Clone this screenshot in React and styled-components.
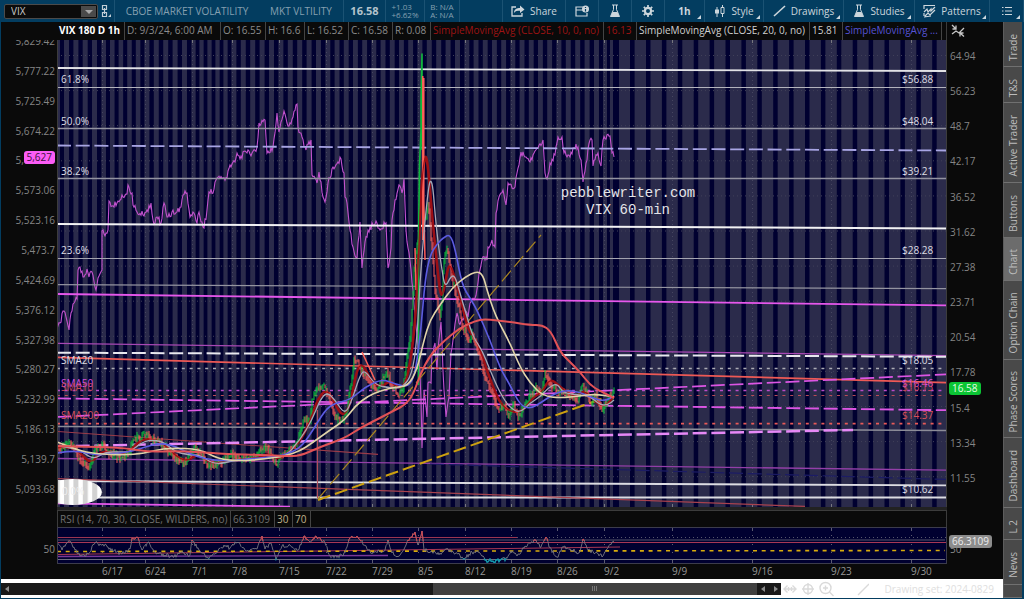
import React from 'react';
import styled, { createGlobalStyle } from 'styled-components';

const GlobalStyle = createGlobalStyle`
  * {
    box-sizing: border-box;
  }
  body {
    margin: 0;
    background: #0a0a0a;
    font-family: 'Open Sans', 'Noto Sans', sans-serif;
    font-size: 10px;
    line-height: 14px;
    color: #8a8a8a;
  }
  button, select {
    font: inherit;
    color: inherit;
    border: 0;
    padding: 0;
    margin: 0;
    background: none;
  }
`;

const Page = styled.div`
  display: flex;
  flex-direction: column;
  min-height: 100vh;
  background: #0a0a0a;
  border: solid #033d60;
  border-width: 0 2px 1px 1px;
`;

const Toolbar = styled.header`
  display: flex;
  align-items: stretch;
  height: 22px;
  margin: 0 -2px 0 -1px;
  background: #033d60;
  color: #86a0b0;
  white-space: nowrap;
`;

const SymbolPicker = styled.div`
  position: relative;
  width: 94px;
  height: 15px;
  margin: 4px 0 0 4px;
  background: #0b0b0b;
  border: 1px solid #4b4b4b;
  border-radius: 2px;
`;

const SymbolSelect = styled.select`
  appearance: none;
  display: block;
  width: 100%;
  height: 13px;
  padding: 0 18px 0 6px;
  line-height: 13px;
  color: #c8c8c8;
`;

const PickerArrow = styled.span`
  position: absolute;
  top: 1px;
  right: 1px;
  width: 15px;
  height: 11px;
  background: #4a4a4a;
  pointer-events: none;
  &::after {
    content: '';
    position: absolute;
    left: 4px;
    top: 4px;
    border: 4px solid transparent;
    border-top-color: #a8a8a8;
    border-bottom: 0;
  }
`;

const Cell = styled.div`
  display: flex;
  align-items: center;
  flex: ${props => (props.grow ? '1 0' : '0 0')} ${props => props.width}px;
  justify-content: center;
  ${props => (props.line ? 'border-right: 1px solid #1b5273;' : '')}
`;

const Price = styled.strong`
  font-size: 11px;
  color: #b4c3cc;
`;

const Stack = styled.div`
  font-size: 8px;
  line-height: 8px;
`;

const ToolButton = styled.button`
  position: relative;
  display: flex;
  align-items: center;
  justify-content: center;
  gap: 5px;
  flex: 0 0 ${props => props.width}px;
  color: #ccd6dd;
  border-right: 1px solid #1b5273;
  font-weight: ${props => (props.bold ? 700 : 400)};
  ${props => (props.menu ? `
  &::after {
    content: '';
    position: absolute;
    right: 3px;
    bottom: 3px;
    border: 2px solid transparent;
    border-right-color: #ccd6dd;
    border-bottom-color: #ccd6dd;
  }` : '')}
`;

const Workspace = styled.div`
  display: flex;
  flex: 1;
`;

const Main = styled.main`
  display: grid;
  grid-template-columns: 56px minmax(0, 1fr) 56px;
  grid-template-rows: 18px minmax(460px, 1fr) 3px 17px 37px 15px 19px;
  flex: 1;
  min-width: 0;
`;

const StudyBar = styled.div`
  grid-column: 2;
  display: flex;
  overflow: hidden;
  white-space: nowrap;
  border-right: 1px solid #3c3c3c;
  ${props => (props.framed ? 'border: 1px solid #3c3c3c; border-bottom: 0;' : '')}
`;

const Study = styled.div`
  flex: none;
  width: ${props => props.width}px;
  padding: 1px 2px 0;
  border-right: 1px solid #444;
  color: ${props => props.color || '#8c8c8c'};
  font-weight: ${props => (props.bold ? 700 : 400)};
`;

const Corner = styled.div`
  grid-column: 3;
  padding: 2px 0 0 4px;
`;

const Axis = styled.div`
  position: relative;
  min-height: 0;
  overflow: hidden;
  display: flex;
  flex-direction: column;
  justify-content: space-between;
  color: #858585;
  text-align: ${props => (props.side === 'left' ? 'right' : 'left')};
  padding: ${props => (props.side === 'left' ? '0 2px 11px 0' : '9px 0 22px 3px')};
  ${props => (props.side === 'left' ? '& > span:first-child { margin-top: -6px; }' : '')}
`;

const Tag = styled.div`
  position: absolute;
  z-index: 1;
  top: ${props => props.top};
  ${props => (props.side === 'left' ? 'right: 2px;' : 'left: 2px;')}
  padding: 0 3px;
  line-height: 13px;
  border-radius: 3px;
  background: ${props => props.bg};
  color: ${props => props.ink};
`;

const Plot = styled.div`
  position: relative;
  min-width: 0;
  min-height: 0;
  background: #000030;
  border-left: 1px solid #3c3c3c;
  border-right: 1px solid #3c3c3c;
  ${props => (props.framed ? 'border: 1px solid #3c3c4c;' : '')}
`;

const Drawing = styled.svg`
  position: absolute;
  inset: 0;
  width: 100%;
  height: 100%;
`;

const Divider = styled.div`
  grid-column: 1 / -1;
  margin: 0 56px;
  background: #222;
`;

const RsiAxis = styled.div`
  position: relative;
  padding: ${props => (props.side === 'left' ? '15px 2px 0 0' : '15px 0 0 3px')};
  text-align: ${props => (props.side === 'left' ? 'right' : 'left')};
`;

const Dates = styled.div`
  grid-column: 2 / 4;
  display: flex;
  padding-left: 45px;
  color: #969696;
  white-space: nowrap;
`;

const DateLabel = styled.span`
  flex: ${props => props.span} 0 0;
  min-width: 0;
`;

const Footer = styled.footer`
  grid-column: 1 / -1;
  display: flex;
  align-items: center;
  background: #fff;
  color: #e0e0e0;
  white-space: nowrap;
`;

const ScrollTrack = styled.div`
  display: flex;
  flex: 1;
  height: 12px;
  background: #191919;
`;

const ScrollButton = styled.button`
  display: flex;
  align-items: center;
  justify-content: center;
  width: 12px;
  background: #191919;
`;

const ScrollThumb = styled.div`
  display: flex;
  align-items: center;
  justify-content: center;
  width: 41.5%;
  margin-left: auto;
  background: #404040;
`;

const FooterTools = styled.div`
  display: flex;
  align-items: center;
  flex: 0 0 222px;
  padding: 0 9px 0 2px;
`;

const DrawingSet = styled.span`
  margin-left: auto;
`;

const Tabs = styled.nav`
  display: flex;
  flex-direction: column;
  width: 19px;
  background: #333;
`;

const Tab = styled.button`
  flex: ${props => props.span} 0 0;
  min-height: 0;
  display: flex;
  align-items: center;
  justify-content: center;
  background: ${props => (props.active ? '#6c6c6c' : '#494949')};
  border-bottom: 1px solid #707070;
  border-left: 1px solid #5c5c5c;
  color: #bcbcbc;
  & > span {
    margin-top: 6px;
    writing-mode: vertical-rl;
    transform: rotate(180deg);
    white-space: nowrap;
  }
`;

const LEFT_PRICES = ['5,829.42', '5,777.22', '5,725.49', '5,674.22', '5,623.41', '5,573.06', '5,523.16', '5,473.7', '5,424.69', '5,376.12', '5,327.98', '5,280.27', '5,232.99', '5,186.13', '5,139.7', '5,093.68'];
const RIGHT_PRICES = ['64.94', '56.23', '48.7', '42.17', '36.52', '31.62', '27.38', '23.71', '20.54', '17.78', '15.4', '13.34', '11.55'];

const WEEKS = [
  ['6/17', 102], ['6/24', 145], ['7/1', 192], ['7/8', 232], ['7/15', 279], ['7/22', 326],
  ['7/29', 372], ['8/5', 418], ['8/12', 465], ['8/19', 511], ['8/26', 557], ['9/2', 604],
  ['9/9', 672], ['9/16', 752], ['9/23', 831], ['9/30', 911],
];

const TABS = [
  ['Trade', 45], ['T&S', 36], ['Active Trader', 80], ['Buttons', 55], ['Chart', 43], ['Option Chain', 79],
  ['Phase Scores', 79], ['Dashboard', 70], ['L 2', 32], ['News', 45], ['', 12],
];

// [x1, y1, x2, y2, color, width, dash]
const LINES = [
  [57, 68, 947, 71, '#e2e2e6', 1.8],
  [57, 87.5, 947, 87.5, '#b4b4be', 1],
  [57, 128.5, 947, 128.5, '#9292a0', 1.5],
  [57, 145.5, 947, 150.5, '#a8a5e4', 1.8, '14 4.7'],
  [57, 178.5, 947, 178.5, '#9292a0', 1.5],
  [57, 224, 947, 228.5, '#f2f2f4', 2],
  [57, 258.5, 947, 258.5, '#a4a4b0', 1.2],
  [57, 284.7, 947, 288.7, '#9494a0', 1.2],
  [57, 294, 947, 305.4, '#e657ec', 1.8],
  [57, 343.4, 947, 355.6, '#a848b4', 1.2],
  [57, 352.7, 947, 356.7, '#e8e8ee', 2, '14 4.7'],
  [57, 357.4, 947, 382.6, '#ee5955', 1.7],
  [57, 368.4, 943, 368.4, '#acacb4', 1.5, '3 4.8'],
  [57, 390.5, 943, 390.5, '#b94cc6', 1.3, '3 4.8'],
  [57, 395.5, 943, 395.5, '#b94c58', 1.2, '3 4.8'],
  [57, 423.6, 943, 423.6, '#e85a58', 1.7, '3 4.8'],
  [57, 398.4, 947, 410.2, '#dc55e4', 1.8, '14 4.7'],
  [57, 417, 947, 374.3, '#dc55e4', 1.7, '14 4.7'],
  [57, 426.4, 947, 430.4, '#8c8c98', 1.5],
  [57, 431.5, 378, 454.4, '#9c3b48', 1.1],
  [57, 446.4, 853, 430, '#e688f6', 2.5, '14 4.7'],
  [57, 458.5, 947, 470.2, '#933fa8', 1.3],
  [430, 464, 947, 479.5, '#1c1c66', 1.2, '14 4.7'],
  [57, 481, 947, 485.4, '#dcdce2', 1.8],
  [57, 497.5, 947, 497.5, '#dcdce2', 1.8],
  [57, 478.6, 805, 506.4, '#a8424e', 1.2],
  [57, 503.4, 290, 506.6, '#e657ec', 1.8],
  [317.5, 410, 317.5, 498, '#b04c5a', 1.1],
  [318, 500, 604, 398, '#cca010', 2, '13 5'],
  [318, 499, 541, 235, '#a88420', 1.2, '14 5'],
];

const LABELS = [
  [61, 83, '61.8%'], [61, 125, '50.0%'], [61, 175, '38.2%'], [61, 254, '23.6%'],
  [61, 364, 'SMA20'], [61, 387, 'SMA50', '#d550de'], [61, 391, 'SMA10', '#c84656'], [61, 419, 'SMA200', '#d8505a'],
  [62, 495, '0.0%', '#efefef'],
  [902, 83, '$56.88'], [902, 125, '$48.04'], [902, 175, '$39.21'], [902, 254, '$28.28'],
  [902, 364, '$18.05'], [902, 387, '$16.46', '#d550de'], [902, 391, '$16.13', '#c84656'], [902, 419, '$14.37', '#d8505a'],
  [902, 493, '$10.62'],
];

const SPX = [57, 329, 60, 323, 64, 311, 67, 321, 69, 330, 71, 313, 74, 303, 77, 299, 78, 270, 80, 267, 83, 277, 87, 269, 89, 277, 92, 272, 96, 290, 98, 278, 102, 270, 102, 231, 106, 233, 108, 230, 109, 201, 112, 206, 117, 203, 122, 195, 127, 194, 128, 185, 132, 193, 133, 205, 137, 212, 143, 215, 147, 210, 151, 203, 153, 220, 155, 223, 157, 217, 161, 223, 164, 203, 167, 217, 172, 212, 177, 212, 181, 207, 183, 195, 187, 193, 190, 217, 194, 213, 197, 223, 199, 212, 202, 222, 204, 228, 207, 210, 209, 192, 213, 193, 217, 178, 227, 178, 230, 165, 235, 162, 237, 153, 240, 159, 245, 151, 252, 153, 257, 147, 259, 123, 265, 120, 267, 153, 273, 147, 277, 113, 279, 132, 281, 122, 284, 111, 287, 123, 289, 126, 293, 117, 297, 104, 298, 127, 302, 137, 306, 150, 311, 140, 312, 175, 317, 183, 319, 172, 323, 197, 325, 202, 328, 183, 333, 167, 335, 167, 341, 159, 344, 173, 345, 197, 347, 203, 350, 230, 353, 247, 357, 258, 360, 222, 362, 268, 365, 242, 368, 230, 373, 225, 376, 221, 380, 230, 386, 223, 388, 268, 391, 248, 392, 220, 395, 200, 399, 185, 402, 193, 404, 178, 406, 230, 408, 248, 411, 270, 413, 290, 416, 327, 419, 357, 421, 400, 422, 448, 424, 390, 427, 417, 428, 383, 431, 383, 432, 353, 435, 343, 437, 370, 438, 350, 441, 322, 444, 390, 446, 417, 449, 397, 451, 353, 453, 340, 457, 313, 459, 323, 463, 320, 465, 310, 468, 317, 470, 303, 475, 298, 480, 270, 482, 260, 487, 260, 488, 247, 492, 240, 495, 247, 496, 213, 499, 197, 503, 190, 506, 205, 508, 183, 515, 187, 517, 173, 521, 152, 525, 157, 530, 162, 533, 155, 538, 148, 543, 140, 545, 173, 547, 179, 550, 163, 555, 155, 558, 137, 562, 137, 564, 153, 570, 157, 573, 148, 578, 147, 581, 160, 583, 182, 586, 163, 590, 140, 592, 140, 593, 166, 598, 153, 601, 166, 603, 140, 610, 136, 612, 153, 614, 157];

const VIX = [57, 447, 62, 450, 70, 443, 77, 449, 79, 459, 84, 463, 91, 467, 96, 448, 103, 445, 108, 452, 115, 455, 122, 458, 130, 453, 134, 440, 140, 437, 147, 434, 152, 440, 160, 440, 168, 450, 175, 458, 185, 464, 195, 448, 202, 454, 209, 467, 218, 464, 225, 460, 232, 454, 240, 459, 255, 458, 266, 446, 272, 455, 277, 464, 285, 452, 292, 447, 298, 442, 305, 418, 308, 422, 311, 420, 313, 400, 318, 390, 324, 385, 330, 395, 334, 412, 341, 422, 348, 410, 352, 385, 355, 359, 359, 362, 362, 370, 368, 378, 373, 388, 380, 387, 388, 372, 392, 385, 400, 395, 404, 388, 408, 355, 411, 338, 413, 310, 415, 270, 418, 245];

const VIX_AFTER = [426, 220, 429, 205, 431, 225, 434, 260, 436, 290, 440, 310, 441, 317, 443, 300, 444, 270, 446, 255, 448, 250, 450, 260, 453, 280, 456, 292, 458, 300, 460, 305, 463, 325, 467, 335, 470, 340, 473, 332, 477, 345, 480, 355, 483, 365, 487, 378, 492, 390, 497, 405, 500, 410, 505, 405, 510, 416, 515, 405, 519, 418, 524, 407, 530, 398, 536, 388, 542, 395, 546, 374, 550, 382, 557, 390, 565, 393, 573, 397, 579, 402, 583, 385, 588, 393, 592, 403, 597, 395, 603, 411, 608, 400, 614, 392];

const SMA10 = [57, 448, 70, 446, 80, 453, 91, 464, 99, 453, 110, 451, 122, 455, 133, 448, 142, 439, 156, 439, 166, 446, 178, 458, 188, 461, 198, 453, 211, 464, 226, 461, 240, 459, 258, 458, 270, 453, 279, 460, 288, 452, 299, 443, 309, 424, 318, 398, 327, 389, 335, 404, 343, 417, 350, 406, 357, 368, 363, 364, 372, 383, 382, 387, 390, 380, 400, 390, 407, 380, 413, 345, 417, 295, 421, 190, 425, 152, 428, 165, 432, 215, 437, 265, 441, 300, 445, 285, 449, 262, 454, 275, 461, 300, 468, 330, 478, 343, 488, 374, 499, 402, 510, 412, 522, 412, 532, 398, 542, 392, 550, 378, 560, 387, 575, 398, 584, 390, 594, 400, 604, 408, 614, 396];

const SMA20 = [57, 446, 78, 448, 93, 460, 105, 452, 120, 452, 130, 452, 145, 440, 163, 441, 175, 452, 190, 455, 200, 455, 215, 465, 235, 460, 260, 459, 275, 456, 285, 457, 300, 440, 312, 420, 320, 400, 327, 392, 335, 400, 345, 415, 352, 400, 360, 375, 365, 370, 375, 385, 390, 388, 402, 388, 412, 375, 417, 340, 420, 280, 425, 220, 429, 184, 431, 180, 433, 188, 435, 213, 438, 243, 442, 270, 445, 288, 451, 276, 455, 276, 460, 293, 467, 317, 473, 337, 482, 350, 490, 370, 500, 393, 510, 408, 520, 413, 530, 403, 540, 397, 548, 388, 557, 383, 563, 393, 580, 395, 590, 396, 600, 405, 608, 405, 614, 400];

const SMA50 = [57, 453, 75, 450, 93, 455, 110, 454, 130, 452, 145, 447, 160, 443, 175, 446, 190, 454, 205, 459, 225, 461, 250, 459, 270, 457, 285, 455, 300, 448, 310, 435, 325, 410, 335, 403, 350, 400, 365, 387, 382, 379, 395, 384, 408, 387, 415, 375, 421, 330, 425, 280, 430, 255, 437, 244, 443, 238, 450, 234, 455, 248, 462, 285, 470, 298, 477, 310, 490, 340, 500, 368, 510, 385, 520, 405, 530, 409, 542, 402, 552, 395, 565, 390, 580, 392, 595, 399, 605, 401, 614, 396];

const SMA100 = [57, 442, 75, 449, 90, 453, 115, 455, 140, 454, 157, 450, 170, 448, 200, 449, 218, 459, 240, 461, 265, 459, 285, 456, 300, 451, 312, 443, 330, 430, 345, 420, 355, 406, 368, 396, 380, 391, 395, 387, 408, 386, 417, 370, 424, 340, 430, 320, 440, 305, 452, 288, 465, 277, 477, 271, 483, 275, 487, 290, 495, 315, 510, 343, 520, 367, 530, 383, 543, 396, 560, 398, 580, 396, 595, 394, 614, 397];

const SMA200 = [57, 446, 100, 447, 125, 448, 150, 452, 175, 451, 200, 452, 225, 454, 265, 455, 285, 456, 300, 456, 320, 447, 345, 438, 360, 428, 380, 418, 395, 410, 405, 405, 413, 395, 420, 375, 430, 355, 445, 340, 460, 328, 475, 321, 485, 319, 510, 322, 530, 325, 542, 325, 551, 331, 560, 352, 570, 362, 580, 372, 590, 385, 600, 391, 614, 398];

const RSI = [57, 543, 62, 550, 69, 541, 75, 550, 80, 556, 88, 554, 95, 543, 102, 545, 108, 547, 114, 551, 122, 554, 130, 549, 132, 538, 137, 537, 142, 550, 148, 542, 155, 552, 165, 555, 174, 557, 180, 552, 190, 555, 192, 540, 200, 551, 208, 558, 216, 553, 224, 545, 230, 548, 237, 542, 246, 551, 257, 549, 262, 536, 265, 549, 271, 543, 276, 559, 282, 546, 290, 545, 298, 550, 304, 536, 310, 542, 316, 536, 325, 543, 330, 556, 343, 556, 350, 538, 357, 536, 364, 545, 372, 553, 385, 550, 388, 540, 392, 553, 399, 556, 405, 547, 408, 540, 415, 532, 418, 545, 422, 531, 424, 550, 432, 552, 440, 553, 448, 549, 458, 554, 464, 559, 472, 552, 480, 553, 486, 560, 493, 561, 500, 560, 507, 558, 511, 551, 517, 556, 525, 546, 535, 540, 541, 547, 546, 537, 549, 547, 557, 557, 563, 547, 572, 550, 579, 553, 583, 539, 588, 550, 597, 553, 603, 556, 607, 549, 612, 542, 614, 541];

const pairs = (flat) => {
  const out = [];
  for (let i = 0; i < flat.length; i += 2) out.push([flat[i], flat[i + 1]]);
  return out;
};

const noise = (n) => {
  const v = Math.sin(n * 12.9898) * 43758.5453;
  return v - Math.floor(v) - 0.5;
};

// one sample per pixel or so, with jitter round the given points
const jagged = (flat, step, amount) => {
  const pts = pairs(flat);
  const out = [];
  for (let i = 0; i < pts.length - 1; i++) {
    const [x1, y1] = pts[i];
    const [x2, y2] = pts[i + 1];
    const count = Math.max(1, Math.round((x2 - x1) / step));
    for (let k = 0; k < count; k++) {
      const t = k / count;
      const x = x1 + (x2 - x1) * t;
      out.push([x, y1 + (y2 - y1) * t + (k ? noise(x + i) * amount : 0)]);
    }
  }
  out.push(pts[pts.length - 1]);
  return out;
};

const toPoints = (list) => list.map(([x, y]) => `${x.toFixed(1)},${y.toFixed(1)}`).join(' ');

const smooth = (flat) => {
  const p = pairs(flat);
  let d = `M${p[0][0]} ${p[0][1]}`;
  for (let i = 1; i < p.length - 1; i++) {
    d += ` Q${p[i][0]} ${p[i][1]} ${(p[i][0] + p[i + 1][0]) / 2} ${(p[i][1] + p[i + 1][1]) / 2}`;
  }
  const last = p[p.length - 1];
  return `${d} L${last[0]} ${last[1]}`;
};

const stripes = () => {
  const out = [[57, 3]];
  const starts = [64, 73.4, 82.7, 92];
  starts.forEach(x => out.push([x, 5]));
  for (let i = 0; i < 11; i++) {
    const x = WEEKS[i][1];
    const day = (WEEKS[i + 1][1] - x) / 5;
    for (let d = 0; d < 5; d++) out.push([x - 0.6 + d * day, day * 0.53]);
  }
  out.push([603, 4], [610, 3], [619, 11]);
  for (let x = 634.6; x < 947; x += 15.9) out.push([x, 11.4]);
  return out;
};

const Candles = ({ data, seed }) => {
  const list = jagged(data, 1, 5);
  return list.map(([x, y], i) => {
    const next = list[i + 1] || [x, y - 2];
    const up = next[1] <= y;
    const top = Math.min(y, next[1]) - Math.abs(noise(i + seed)) * 9;
    const bottom = Math.max(y, next[1]) + Math.abs(noise(i * 3 + seed)) * 9;
    return <line key={i} x1={x} x2={x} y1={top} y2={bottom} stroke={up ? '#0cc43c' : '#ff6058'} strokeWidth="1" />;
  });
};

const PriceChart = () => (
  <Drawing viewBox="58 40 888 467" preserveAspectRatio="none" role="img" aria-label="VIX hourly price chart">
    {stripes().map(([x, w], i) => <rect key={i} x={x} y="40" width={w} height="467" fill="#2b2b4b" />)}
    {WEEKS.map(([d, x]) => (
      <g key={d} stroke="#464660">
        <line x1={x + 0.5} x2={x + 0.5} y1="40" y2="507" strokeDasharray="1 3" />
        <path d={`M${x + 0.5} 40v3M${x + 0.5} 504v3`} stroke="#77777f" />
      </g>
    ))}
    {RIGHT_PRICES.map((p, i) => (
      <line key={p} x1="57" x2="947" y1={55.5 + i * 35.1} y2={55.5 + i * 35.1} stroke="#404059" strokeDasharray="1 3" />
    ))}

    <defs>
      <pattern id="bars" x="64" width="9.4" height="10" patternUnits="userSpaceOnUse">
        <rect width="9.4" height="10" fill="#fff" />
        <rect width="5" height="10" fill="#d2d2d2" />
      </pattern>
    </defs>

    <polyline points={toPoints(jagged(SPX, 1, 7))} fill="none" stroke="#c252cd" strokeWidth="1.1" />
    {LINES.map(([x1, y1, x2, y2, color, width, dash], i) => (
      <line key={i} x1={x1} y1={y1} x2={x2} y2={y2} stroke={color} strokeWidth={width} strokeDasharray={dash} />
    ))}
    <ellipse cx="73" cy="492" rx="29" ry="13" fill="url(#bars)" />

    <g fill="none" strokeLinejoin="round">
      <path d={smooth(SMA10)} stroke="#9c1016" strokeWidth="2.6" />
      <Candles data={VIX} seed={4} />
      <path d="M418.500 385V240L419.500 165L421 130V100L422 54V150" stroke="#0fb83e" strokeWidth="1.6" />
      <path d="M422.800 76V240M423.800 78V200L425 260M415 248L416 290M362 352L375 380" stroke="#ff6058" strokeWidth="1.5" />
      <Candles data={VIX_AFTER} seed={9} />
      <path d={smooth(SMA10)} stroke="#9c1016" strokeWidth="1.2" />
      <path d={smooth(SMA20)} stroke="#a8a8b6" strokeWidth="1.3" />
      <path d={smooth(SMA50)} stroke="#5c5ce0" strokeWidth="1.6" />
      <path d={smooth(SMA100)} stroke="#e0d3a8" strokeWidth="1.6" />
      <path d={smooth(SMA200)} stroke="#e25256" strokeWidth="2" />
    </g>

    <g fontSize="10" fontFamily="'Open Sans', sans-serif">
      {LABELS.map(([x, y, text, color]) => <text key={x + text} x={x} y={y} fill={color || '#dcdce4'}>{text}</text>)}
    </g>
    <g fontSize="14" fontFamily="'Liberation Mono', monospace" fill="#e4e4e8" textAnchor="middle">
      <text x="628" y="197">pebblewriter.com</text>
      <text x="628" y="214">VIX 60-min</text>
    </g>
  </Drawing>
);

const RsiChart = () => {
  const line = jagged(RSI, 1, 4);
  return (
    <Drawing viewBox="58 528 888 35" preserveAspectRatio="none" role="img" aria-label="RSI chart">
      <clipPath id="over"><rect x="57" y="528" width="890" height="13" /></clipPath>
      <clipPath id="under"><rect x="57" y="558.500" width="890" height="5" /></clipPath>
      {WEEKS.map(([d, x]) => <path key={d} d={`M${x + 0.5} 528v3m0 4v1m0 8v1m0 7v1m0 7v3`} stroke="#5c5c70" />)}
      <line x1="57" x2="947" y1="537.5" y2="537.5" stroke="#55556a" strokeDasharray="1 3" />
      <line x1="57" x2="517" y1="537.5" y2="537.5" stroke="#9c3551" />
      <line x1="57" x2="945" y1="540" y2="540" stroke="#55556a" />
      <line x1="57" x2="947" y1="542.5" y2="542.5" stroke="#a83754" strokeWidth="1.2" />
      <line x1="57" x2="620" y1="554.5" y2="547" stroke="#a83754" />
      <line x1="57" x2="388" y1="556.5" y2="555.5" stroke="#7a3898" strokeWidth="1.4" />
      <line x1="57" x2="945" y1="559.5" y2="559.5" stroke="#70707e" />
      <line x1="57" x2="945" y1="551.500" y2="550.5" stroke="#d8ac0c" strokeWidth="1.600" strokeDasharray="4 4.700" />
      <g fill="none">
        <polyline points={toPoints(line)} stroke="#77777f" strokeWidth="0.9" />
        <polyline points={toPoints(line)} stroke="#cc4852" clipPath="url(#over)" />
        <polyline points={toPoints(line)} stroke="#109aac" strokeWidth="1.4" clipPath="url(#under)" />
      </g>
    </Drawing>
  );
};

const Flask = () => (
  <svg width="12" height="14" viewBox="0 0 12 14">
    <path d="M3 1h6M4.500 1v4.500L1.500 12.500h9L7.500 5.500V1" fill="none" stroke="#cdd6dc" />
    <path d="M3.500 8h5l2 4.500h-9z" fill="#cdd6dc" />
  </svg>
);

const ShareIcon = () => (
  <svg width="14" height="12" viewBox="0 0 14 12">
    <path d="M5 2H1v9h10V8" fill="none" stroke="#cdd6dc" strokeWidth="1.300" />
    <path d="M3 8c0-4 3-5 6-5V0.500L13.500 4.500 9 8V5.800C6 5.800 4.500 6 3 8z" fill="#cdd6dc" />
  </svg>
);

const NoteIcon = () => (
  <svg width="14" height="12" viewBox="0 0 14 12">
    <path d="M8 2H1v9h11V8M1 5h7" fill="none" stroke="#cdd6dc" strokeWidth="1.200" />
    <circle cx="10.500" cy="4" r="3.500" fill="#cdd6dc" />
    <path d="M10.500 2v1M10.500 4v2.500" stroke="#033d60" strokeWidth="1.200" />
  </svg>
);

const GearIcon = () => (
  <svg width="12" height="12" viewBox="0 0 12 12">
    <circle cx="6" cy="6" r="3.100" fill="none" stroke="#cdd6dc" strokeWidth="2.200" />
    <path d="M6 0v2M6 10v2M0 6h2M10 6h2M1.800 1.800l1.500 1.500M8.700 8.700l1.500 1.500M1.800 10.200l1.500-1.500M8.700 3.300l1.500-1.500" stroke="#cdd6dc" strokeWidth="1.700" />
  </svg>
);

const StyleIcon = () => (
  <svg width="12" height="13" viewBox="0 0 12 13">
    <path d="M3 2v10M8.500 0v12" stroke="#cdd6dc" />
    <path d="M1 4.500h4v4H1z" fill="#cdd6dc" />
    <path d="M7 2.500h3v6H7z" fill="#033d60" stroke="#cdd6dc" />
  </svg>
);

const SlashIcon = () => (
  <svg width="13" height="12" viewBox="0 0 13 12"><path d="M1 11L12 1" stroke="#cdd6dc" strokeWidth="1.600" /></svg>
);

const PatternIcon = () => (
  <svg width="13" height="14" viewBox="0 0 13 14">
    <path d="M1 5V1.500h11M1 8l3-3 1 3 3-3v2l4-4M1 12V9M2 12l3-3 2 2 5-5M1 13l7-1" fill="none" stroke="#cdd6dc" strokeWidth="1.200" />
  </svg>
);

const ListIcon = () => (
  <svg width="10" height="10" viewBox="0 0 10 10">
    <path d="M0 1.500h1.500M3 1.500h7M0 5h1.500M3 5h7M0 8.500h1.500M3 8.500h7" stroke="#cdd6dc" strokeWidth="1.200" />
  </svg>
);

const LinkIcon = () => (
  <svg width="10" height="14" viewBox="0 0 10 14">
    <path d="M1.500 5.500V1.500h4v4zM1.500 8.500v4h4v-4zM3.500 4v6" fill="none" stroke="#c3ced6" strokeWidth="1.200" />
    <path d="M10 10v3H7z" fill="#c3ced6" />
  </svg>
);

const App = () => (
  <Page>
    <GlobalStyle />
    <Toolbar>
      <SymbolPicker>
        <SymbolSelect aria-label="Symbol" defaultValue="VIX">
          <option>VIX</option>
        </SymbolSelect>
        <PickerArrow />
      </SymbolPicker>
      <Cell width={17} line><LinkIcon /></Cell>
      <Cell width={144}>CBOE MARKET VOLATILITY</Cell>
      <Cell width={85} line>MKT VLTILITY</Cell>
      <Cell width={42} line><Price>16.58</Price></Cell>
      <Cell width={39} line><Stack>+1.03<br />+6.62%</Stack></Cell>
      <Cell width={35} line><Stack>B: N/A<br />A: N/A</Stack></Cell>
      <Cell width={43} grow="true" line />
      <ToolButton width={63}><ShareIcon />Share</ToolButton>
      <ToolButton width={33} aria-label="Notes"><NoteIcon /></ToolButton>
      <ToolButton width={33} aria-label="Lab"><Flask /></ToolButton>
      <ToolButton width={33} aria-label="Settings"><GearIcon /></ToolButton>
      <ToolButton width={40} menu bold>1h</ToolButton>
      <ToolButton width={59} menu><StyleIcon />Style</ToolButton>
      <ToolButton width={80} menu><SlashIcon />Drawings</ToolButton>
      <ToolButton width={71} menu><Flask />Studies</ToolButton>
      <ToolButton width={75} menu><PatternIcon />Patterns</ToolButton>
      <ToolButton width={34} menu aria-label="Menu"><ListIcon /></ToolButton>
    </Toolbar>

    <Workspace>
      <Main>
        <StudyBar>
          <Study width={68} color="#fff" bold>VIX 180 D 1h</Study>
          <Study width={96}>D: 9/3/24, 6:00 AM</Study>
          <Study width={45}>O: 16.55</Study>
          <Study width={39}>H: 16.6</Study>
          <Study width={44}>L: 16.52</Study>
          <Study width={44}>C: 16.58</Study>
          <Study width={38}>R: 0.08</Study>
          <Study width={173} color="#9c1313">SimpleMovingAvg (CLOSE, 10, 0, no)</Study>
          <Study width={33} color="#9c1313">16.13</Study>
          <Study width={173} color="#d0d0d0">SimpleMovingAvg (CLOSE, 20, 0, no)</Study>
          <Study width={33} color="#d0d0d0">15.81</Study>
          <Study width={99} color="#5653d4">SimpleMovingAvg ...</Study>
        </StudyBar>
        <Corner>
          <svg width="15" height="14" viewBox="0 0 15 14">
            <path d="M1 1l4 4M5 1.500V5H1.500M1 10l4-3 3 2 5-5M13 12.500L9 9M9 12.500V9h3.500" fill="none" stroke="#c8c8c8" strokeWidth="1.300" />
          </svg>
        </Corner>

        <Axis side="left">
          {LEFT_PRICES.map(p => <span key={p}>{p}</span>)}
          <Tag side="left" top="23.800%" bg="#fb5cf6" ink="#3b123b">5,627</Tag>
        </Axis>
        <Plot><PriceChart /></Plot>
        <Axis side="right">
          {RIGHT_PRICES.map(p => <span key={p}>{p}</span>)}
          <Tag top="73.200%" bg="#0bc434" ink="#e4ffe4">16.58</Tag>
        </Axis>

        <Divider />

        <StudyBar framed>
          <Study width={173} color="#707070">RSI (14, 70, 30, CLOSE, WILDERS, no)</Study>
          <Study width={44} color="#707070">66.3109</Study>
          <Study width={18} color="#c0b58c">30</Study>
          <Study width={18} color="#c0b58c">70</Study>
        </StudyBar>
        <Corner />

        <RsiAxis side="left">50</RsiAxis>
        <Plot framed><RsiChart /></Plot>
        <RsiAxis side="right">
          50
          <Tag top="8px" bg="#8c8c8c" ink="#ededed">66.3109</Tag>
        </RsiAxis>

        <Dates>
          {WEEKS.map(([d, x], i) => (
            <DateLabel key={d} span={(WEEKS[i + 1] ? WEEKS[i + 1][1] : 1003) - x}>{d}</DateLabel>
          ))}
        </Dates>

        <Footer>
          <ScrollTrack>
            <ScrollButton aria-label="Scroll to start">
              <svg width="5" height="6" viewBox="0 0 5 6"><path d="M4 0v6L0 3z" fill="#8c8c8c" /></svg>
            </ScrollButton>
            <ScrollThumb>
              <svg width="6" height="5" viewBox="0 0 6 5"><path d="M0.500 0v5M2.500 0v5M4.500 0v5" stroke="#777" /></svg>
            </ScrollThumb>
            <ScrollButton aria-label="Scroll left">
              <svg width="5" height="6" viewBox="0 0 5 6"><path d="M4 0v6L0 3z" fill="#8c8c8c" /></svg>
            </ScrollButton>
            <ScrollButton aria-label="Scroll right">
              <svg width="5" height="6" viewBox="0 0 5 6"><path d="M1 0v6l4-3z" fill="#8c8c8c" /></svg>
            </ScrollButton>
          </ScrollTrack>
          <FooterTools>
            <svg width="86" height="16" viewBox="0 0 86 16">
              <g fill="none" stroke="#dadada" strokeWidth="1.400">
                <path d="M1 8h12M4.500 4.500L1 8l3.500 3.500M9.500 4.500L13 8l-3.500 3.500M5.500 6v4M8.500 6v4" />
                <circle cx="25" cy="8" r="4.500" />
                <path d="M25 2v12M19 8h12" />
                <circle cx="42.500" cy="7" r="5.500" />
                <path d="M40 7h5M42.500 4.500v5M46.500 11l4 4M75 14L86 3" />
              </g>
            </svg>
            <DrawingSet>Drawing set: 2024-0829</DrawingSet>
          </FooterTools>
        </Footer>
      </Main>

      <Tabs aria-label="Panels">
        {TABS.map(([name, span]) => (
          <Tab key={name || 'end'} span={span} active={name === 'Chart'} aria-label={name || 'More'}>
            <span>{name}</span>
          </Tab>
        ))}
      </Tabs>
    </Workspace>
  </Page>
);

export default App;
